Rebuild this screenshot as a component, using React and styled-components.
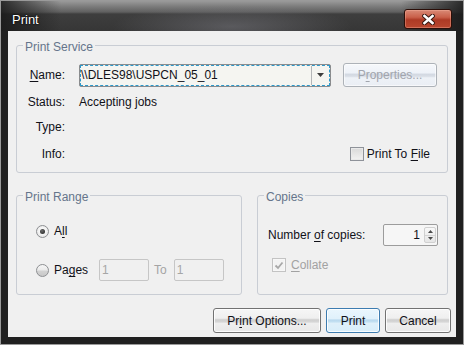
import React from "react";
import styled, { createGlobalStyle, css } from "styled-components";

const GlobalStyle = createGlobalStyle`
  html, body { margin: 0; padding: 0; background: #1f1f1f; }
  body {
    font-family: "Liberation Sans", Arial, sans-serif;
    font-size: 12px;
    color: #111118;
  }
  * { box-sizing: border-box; }
`;

const Window = styled.div`
  width: 464px;
  height: 345px;
  border: 1px solid #9a9a9a;
  background: #202020;
  display: flex;
  flex-direction: column;
  overflow: hidden;
`;

const TitleBar = styled.div`
  height: 30px;
  flex: none;
  display: flex;
  align-items: flex-start;
  justify-content: space-between;
  padding: 0 11px;
  background:
    radial-gradient(ellipse 120px 22px at 50% 85%, rgba(112, 112, 118, 0.6), rgba(112, 112, 118, 0) 100%),
    linear-gradient(to right, rgba(24, 24, 24, 0.85) 0, rgba(24, 24, 24, 0) 60px, rgba(24, 24, 24, 0) 400px, rgba(24, 24, 24, 0.85) 462px),
    linear-gradient(to bottom, #9a9a9a 0, #7e7e7e 5px, #606060 11px, #3e3e3e 13px, #363636 30px);
`;

const Title = styled.span`
  margin-top: 11px;
  font-size: 13px;
  line-height: 16px;
  color: #ffffff;
  text-shadow: 0 0 2px #000, 0 0 1px #000;
`;

const CloseButton = styled.div`
  margin-top: 8px;
  width: 48px;
  height: 20px;
  border: 1px solid #2a0e08;
  border-radius: 3px;
  background: linear-gradient(#d98a76 0, #c9604a 40%, #ad3a25 55%, #b9472f 100%);
  box-shadow: inset 0 0 0 1px rgba(255, 190, 170, 0.35);
  display: flex;
  align-items: center;
  justify-content: center;
`;

const Client = styled.div`
  margin: 0 7px;
  height: 306px;
  flex: none;
  background: #f0f0f0;
  padding: 5px 5px 4px 8px;
  display: flex;
  flex-direction: column;
`;

const Group = styled.fieldset`
  margin: 0;
  padding: 0;
  min-width: 0;
  border: 1px solid #c9cdd4;
  border-radius: 3px;
  width: ${(p) => p.$w}px;
  height: ${(p) => p.$h}px;
  flex: none;
`;

const Legend = styled.legend`
  margin-left: 6px;
  padding: 4px 2px 1px;
  line-height: 14px;
  color: #65758b;
`;

const ServiceBody = styled.div`
  padding: 8px 10px 0 8px;
  display: flex;
  flex-direction: column;
`;

const FieldRow = styled.div`
  display: grid;
  grid-template-columns: 40px 1fr;
  column-gap: 14px;
  align-items: center;
  height: ${(p) => p.$h}px;
  margin-top: ${(p) => p.$mt || 0}px;
`;

const Label = styled.span`
  text-align: right;
  line-height: 14px;
  white-space: nowrap;
`;

const Value = styled.div`
  display: flex;
  align-items: ${(p) => (p.$top ? "flex-start" : "center")};
  justify-content: ${(p) => (p.$end ? "flex-end" : "flex-start")};
  gap: 12px;
  line-height: 14px;
  padding-right: ${(p) => (p.$end ? 7 : 0)}px;
  height: 100%;
`;

const U = styled.span`
  text-decoration: underline;
  text-underline-offset: 2px;
`;

const Combo = styled.div`
  width: 252px;
  height: 23px;
  border: 1px solid #8a8c8e;
  border-radius: 2px;
  background: #f5f5f1;
  display: flex;
`;

const ComboFocus = styled.div`
  flex: 1;
  border: 1px dashed #2e98c9;
  display: flex;
  align-items: stretch;
`;

const ComboText = styled.span`
  flex: 1;
  line-height: 19px;
  padding-left: 0;
  white-space: nowrap;
`;

const ComboArrow = styled.span`
  width: 18px;
  border-left: 1px solid #b4b6b8;
  display: flex;
  align-items: center;
  justify-content: center;
`;

const buttonBase = css`
  height: ${(p) => p.$h || 25}px;
  width: ${(p) => p.$w}px;
  border-radius: 3px;
  display: flex;
  align-items: center;
  justify-content: center;
  line-height: 14px;
  white-space: nowrap;
  flex: none;
`;

const Button = styled.div`
  ${buttonBase}
  border: 1px solid ${(p) => (p.$default ? "#3d7cb0" : p.$disabled ? "#adb2b8" : "#727272")};
  color: ${(p) => (p.$disabled ? "#a1a5ad" : "#111118")};
  box-shadow: inset 0 0 0 1px ${(p) => (p.$disabled ? "rgba(255,255,255,0.6)" : "rgba(255,255,255,0.85)")};
  background: ${(p) =>
    p.$default
      ? "linear-gradient(#eaf6fd 0, #e0f1fb 42%, #b9d9ee 48%, #c3e0f2 56%, #dff0fa 62%, #d8eefa 100%)"
      : p.$disabled
      ? "linear-gradient(#f6f8fb 0, #eef2f8 40%, #d3d9e2 47%, #d9dee6 56%, #eef2f7 63%, #eaeef4 100%)"
      : "linear-gradient(#f6f6f6 0, #efefef 40%, #cfcfcf 47%, #d6d6d6 56%, #eeeeee 63%, #e8e8e8 100%)"};
`;

const RangeBody = styled.div`
  padding: 17px 0 0 19px;
  display: flex;
  flex-direction: column;
`;

const OptionRow = styled.div`
  display: flex;
  align-items: center;
  height: ${(p) => p.$h}px;
  margin-top: ${(p) => p.$mt || 0}px;
  padding-left: ${(p) => p.$pl || 0}px;
  line-height: 14px;
`;

const Choice = styled.span`
  display: inline-flex;
  align-items: center;
  gap: ${(p) => p.$gap || 5}px;
  color: ${(p) => (p.$disabled ? "#a2a2a2" : "inherit")};
`;

const Radio = styled.span`
  width: 13px;
  height: 13px;
  border-radius: 50%;
  border: 1px solid #8d8f92;
  flex: none;
  display: flex;
  align-items: center;
  justify-content: center;
  background: ${(p) =>
    p.$checked
      ? "radial-gradient(circle at 50% 45%, #ffffff 0, #f2f2f2 50%, #d8d8d8 100%)"
      : "linear-gradient(#f6f6f6 0, #ebebeb 45%, #d2d2d2 55%, #c8c8c8 100%)"};
  &::after {
    content: "";
    display: ${(p) => (p.$checked ? "block" : "none")};
    width: 5px;
    height: 5px;
    border-radius: 50%;
    background: radial-gradient(circle at 40% 35%, #6a6a6a, #1e1e1e);
  }
`;

const SmallInput = styled.span`
  width: 50px;
  height: 22px;
  border: 1px solid #c6c6c6;
  border-radius: 2px;
  background: #f0f0f0;
  color: #a6a6a6;
  line-height: 20px;
  padding-left: 2px;
  margin-left: ${(p) => p.$ml || 0}px;
  flex: none;
`;

const Muted = styled.span`
  color: #a4a4a4;
  margin: 0 7px 0 5px;
`;

const CopiesBody = styled.div`
  padding: 19px 9px 0 10px;
  display: flex;
  flex-direction: column;
`;

const SpinRow = styled.div`
  display: flex;
  align-items: center;
  justify-content: space-between;
  height: 22px;
  line-height: 14px;
`;

const Spinner = styled.div`
  width: 55px;
  height: 22px;
  border: 1px solid #9c9c9c;
  border-radius: 2px;
  background: #f6f6f6;
  display: flex;
`;

const SpinValue = styled.span`
  flex: 1;
  text-align: right;
  padding-right: 4px;
  line-height: 20px;
`;

const SpinArrows = styled.span`
  width: 12px;
  margin: 2px 1px 2px 0;
  border: 1px solid #d0d0d0;
  border-radius: 2px;
  background: linear-gradient(#f8f8f8, #e6e6e6);
  display: flex;
  flex-direction: column;
`;

const SpinHalf = styled.span`
  flex: 1;
  display: flex;
  align-items: center;
  justify-content: center;
  border-top: ${(p) => (p.$bottom ? "1px solid #d4d4d4" : "none")};
`;

const CheckBox = styled.span`
  width: 14px;
  height: 14px;
  flex: none;
  border: 1px solid ${(p) => (p.$disabled ? "#c3c3c3" : "#8e9299")};
  background: ${(p) => (p.$disabled ? "#f3f3f3" : "linear-gradient(#d9d9d9, #f2f2f2)")};
  box-shadow: inset 0 0 0 1px ${(p) => (p.$disabled ? "#f7f7f7" : "#e9e9e9")};
  display: flex;
  align-items: center;
  justify-content: center;
`;

const GroupsRow = styled.div`
  display: flex;
  gap: 15px;
  margin-top: 13px;
  width: 432px;
`;

const ButtonRow = styled.div`
  display: flex;
  justify-content: flex-end;
  gap: 5px;
  margin-top: 13px;
`;

const CloseIcon = () => (
  <svg width="13" height="11" viewBox="0 0 13 11">
    <path d="M2.5 2 L10.5 9 M10.5 2 L2.5 9" stroke="#3a1810" strokeWidth="4.6" strokeLinecap="square" />
    <path d="M2.5 2 L10.5 9 M10.5 2 L2.5 9" stroke="#ffffff" strokeWidth="2.6" strokeLinecap="square" />
  </svg>
);

const DownArrow = () => (
  <svg width="7" height="4" viewBox="0 0 7 4">
    <path d="M0 0 H7 L3.5 4 Z" fill="#3c3c3c" />
  </svg>
);

const SpinTri = ({ up }) => (
  <svg width="5" height="3" viewBox="0 0 5 3">
    <path d={up ? "M0 3 H5 L2.5 0 Z" : "M0 0 H5 L2.5 3 Z"} fill="#4a4a4a" />
  </svg>
);

const Check = () => (
  <svg width="10" height="9" viewBox="0 0 10 9">
    <path d="M1.5 4.5 L4 7 L8.5 1.5" stroke="#a8a8a8" strokeWidth="1.8" fill="none" />
  </svg>
);

export default function App() {
  return (
    <>
      <GlobalStyle />
      <Window>
        <TitleBar>
          <Title>Print</Title>
          <CloseButton>
            <CloseIcon />
          </CloseButton>
        </TitleBar>
        <Client>
          <Group $w={432} $h={137}>
            <Legend>Print Service</Legend>
            <ServiceBody>
              <FieldRow $h={23}>
                <Label>
                  <U>N</U>ame:
                </Label>
                <Value>
                  <Combo>
                    <ComboFocus>
                      <ComboText>{"\\\\DLES98\\USPCN_05_01"}</ComboText>
                      <ComboArrow>
                        <DownArrow />
                      </ComboArrow>
                    </ComboFocus>
                  </Combo>
                  <Button $w={94} $h={24} $disabled>
                    P<U>r</U>operties...
                  </Button>
                </Value>
              </FieldRow>
              <FieldRow $h={14} $mt={9}>
                <Label>Status:</Label>
                <Value>Accepting jobs</Value>
              </FieldRow>
              <FieldRow $h={14} $mt={11}>
                <Label>Type:</Label>
                <Value />
              </FieldRow>
              <FieldRow $h={14} $mt={13}>
                <Label>Info:</Label>
                <Value $end>
                  <Choice $gap={3}>
                    <CheckBox />
                    <span>
                      Print To <U>F</U>ile
                    </span>
                  </Choice>
                </Value>
              </FieldRow>
            </ServiceBody>
          </Group>

          <GroupsRow>
            <Group $w={226} $h={109}>
              <Legend>Print Range</Legend>
              <RangeBody>
                <OptionRow $h={18}>
                  <Choice>
                    <Radio $checked />
                    <span>
                      A<U>l</U>l
                    </span>
                  </Choice>
                </OptionRow>
                <OptionRow $h={22} $mt={19}>
                  <Choice>
                    <Radio />
                    <span>
                      Pa<U>g</U>es
                    </span>
                  </Choice>
                  <SmallInput $ml={11}>1</SmallInput>
                  <Muted>To</Muted>
                  <SmallInput>1</SmallInput>
                </OptionRow>
              </RangeBody>
            </Group>

            <Group $w={191} $h={109}>
              <Legend>Copies</Legend>
              <CopiesBody>
                <SpinRow>
                  <span>
                    Number <U>o</U>f copies:
                  </span>
                  <Spinner>
                    <SpinValue>1</SpinValue>
                    <SpinArrows>
                      <SpinHalf>
                        <SpinTri up />
                      </SpinHalf>
                      <SpinHalf $bottom>
                        <SpinTri />
                      </SpinHalf>
                    </SpinArrows>
                  </Spinner>
                </SpinRow>
                <OptionRow $h={14} $mt={12} $pl={4}>
                  <Choice $disabled>
                    <CheckBox $disabled>
                      <Check />
                    </CheckBox>
                    <span>
                      <U>C</U>ollate
                    </span>
                  </Choice>
                </OptionRow>
              </CopiesBody>
            </Group>
          </GroupsRow>

          <ButtonRow>
            <Button $w={108}>
              Pr<U>i</U>nt Options...
            </Button>
            <Button $w={54} $default>
              Print
            </Button>
            <Button $w={66}>Cancel</Button>
          </ButtonRow>
        </Client>
      </Window>
    </>
  );
}
